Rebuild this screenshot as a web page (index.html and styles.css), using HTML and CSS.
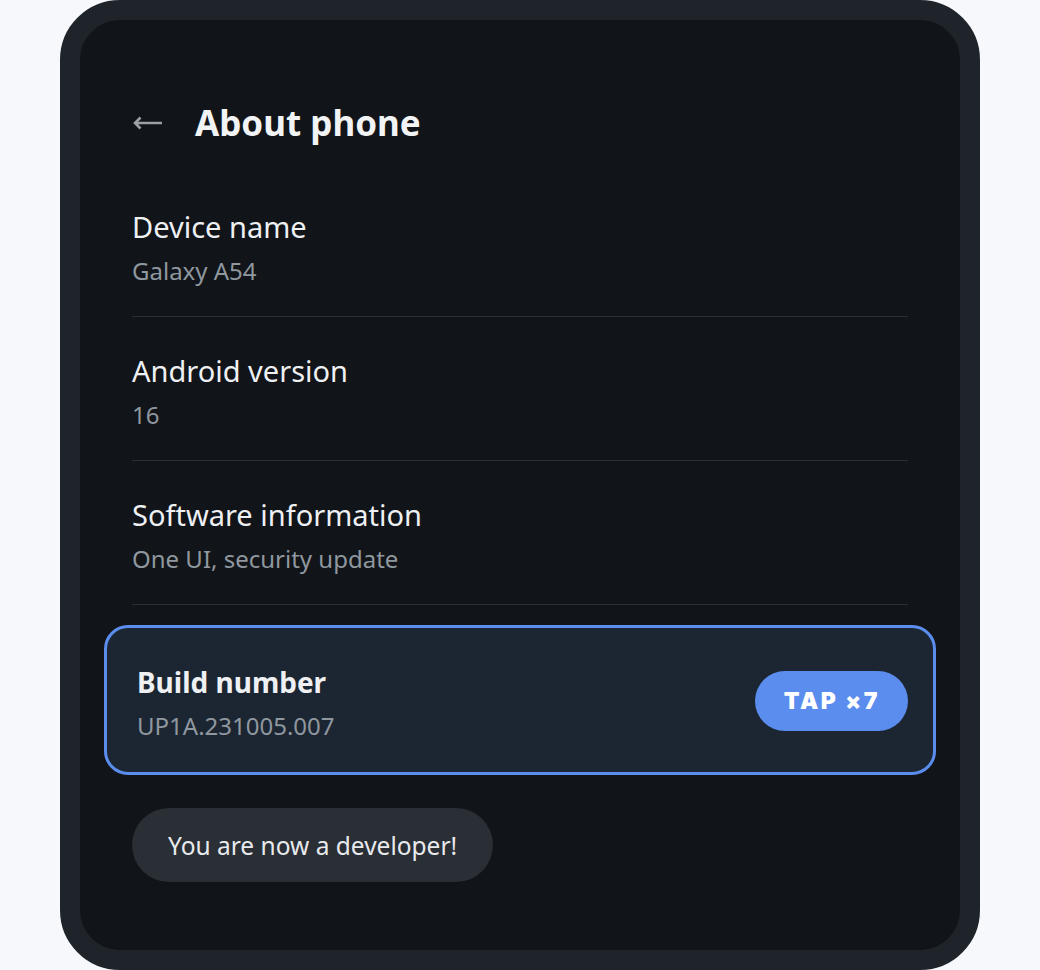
FILE: index.html
```html
<!DOCTYPE html>
<html lang="en">
<head>
    <meta charset="UTF-8">
    <meta name="viewport" content="width=device-width, initial-scale=1.0">
    <title>About phone</title>
    <link rel="stylesheet" href="styles.css">
</head>
<body>
    <div class="phone">
        <div class="topbar">
            <svg class="back" width="30" height="20" viewBox="0 0 30 20">
                <path d="M30 10H3 M8.5 4.5 L3 10 L8.5 15.5" fill="none" stroke="#9aa0a6" stroke-width="2.6" stroke-linecap="butt"/>
            </svg>
            <h1 class="title">About phone</h1>
        </div>

        <div class="row">
            <div class="row-title">Device name</div>
            <div class="row-sub">Galaxy A54</div>
        </div>
        <div class="row">
            <div class="row-title">Android version</div>
            <div class="row-sub">16</div>
        </div>
        <div class="row">
            <div class="row-title">Software information</div>
            <div class="row-sub">One UI, security update</div>
        </div>

        <!-- Build number: tap it seven times to unlock developer options -->
        <div class="build-card">
            <div>
                <div class="row-title bold">Build number</div>
                <div class="row-sub">UP1A.231005.007</div>
            </div>
            <div class="tap-pill">TAP &times;7</div>
        </div>

        <div class="toast">You are now a developer!</div>
    </div>
</body>
</html>
```

FILE: styles.css
```css
body {
    margin: 0;
    padding: 0;
    background-color: #f6f8fc;
    font-family: "Noto Sans", "Open Sans", sans-serif;
}
.phone {
    box-sizing: border-box;
    width: 920px;
    height: 970px;
    margin: 0 auto;
    padding: 83px 52px 0;
    background-color: #111418;
    border: 20px solid #1f232a;
    border-radius: 60px;
    color: #eef0f3;
}
.topbar {
    display: flex;
    align-items: center;
    gap: 33px;
    height: 40px;
    margin-bottom: 30px;
}
.back {
    flex-shrink: 0;
}
.title {
    margin: 0;
    font-size: 35px;
    font-weight: 700;
    line-height: 40px;
    color: #f1f3f5;
}
.row {
    padding: 36px 0 29px;
    border-bottom: 1px solid #2a2e35;
}
.row-title {
    font-size: 29px;
    line-height: 36px;
    color: #eef0f3;
}
.row-title.bold {
    font-size: 28px;
    font-weight: 700;
}
.row-sub {
    margin-top: 10px;
    font-size: 24px;
    line-height: 32px;
    color: #8f979f;
}
.build-card {
    display: flex;
    justify-content: space-between;
    align-items: center;
    margin: 20px -28px 0;
    padding: 36px 25px 30px 30px;
    background-color: #1c2632;
    border: 3px solid #5b8def;
    border-radius: 24px;
}
.tap-pill {
    height: 60px;
    padding: 0 28px 0 29px;
    margin-bottom: 4px;
    display: flex;
    align-items: center;
    background-color: #5b8def;
    border-radius: 30px;
    color: #ffffff;
    font-family: "Inter", sans-serif;
    font-size: 23px;
    font-weight: 900;
    letter-spacing: 2.5px;
}
.toast {
    display: inline-flex;
    align-items: center;
    height: 74px;
    margin-top: 33px;
    padding: 0 36px;
    background-color: #2a2e35;
    border-radius: 37px;
    font-size: 24.5px;
    color: #e8eaed;
}
```
